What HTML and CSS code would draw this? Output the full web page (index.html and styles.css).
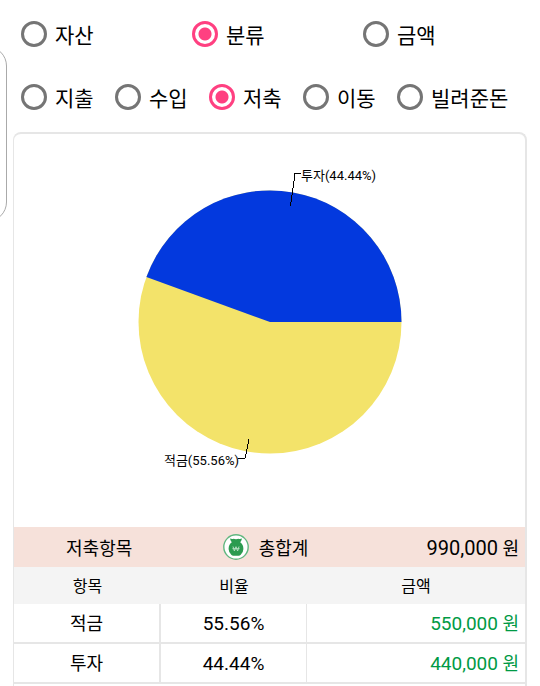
FILE: index.html
```html
<!DOCTYPE html>
<html lang="ko">
<head>
  <meta charset="UTF-8">
  <title>저축 통계</title>
  <meta name="viewport" content="width=device-width, initial-scale=1.0">
  <link rel="stylesheet" href="styles.css">
</head>
<body>
  <div class="edge-panel"></div>

  <form class="filters">
    <div class="group three">
      <label><input type="radio" name="view">자산</label>
      <label><input type="radio" name="view" checked>분류</label>
      <label><input type="radio" name="view">금액</label>
    </div>
    <div class="group five">
      <label><input type="radio" name="kind">지출</label>
      <label><input type="radio" name="kind">수입</label>
      <label><input type="radio" name="kind" checked>저축</label>
      <label><input type="radio" name="kind">이동</label>
      <label><input type="radio" name="kind">빌려준돈</label>
    </div>
  </form>

  <main class="card">
    <svg class="pie" viewBox="0 0 511 393" role="img" aria-label="저축 비율">
      <circle cx="256" cy="188" r="131.5" fill="#f3e36a"/>
      <path d="M256 188H387.5A131.5 131.5 0 0 0 132.4 143Z" fill="#0339de"/>
      <path class="leader" d="M276.5 72L281 39.5H287M235 305L231 324.5H224"/>
      <text x="287" y="46">투자(44.44%)</text>
      <text x="225" y="331" text-anchor="end">적금(55.56%)</text>
    </svg>

    <div class="summary">
      <span>저축항목</span>
      <span class="total">
        <svg class="bag" viewBox="0 0 26 26" aria-hidden="true">
          <circle cx="13" cy="13" r="12.2" fill="#fff" stroke="#62b780" stroke-width="1.4"/>
          <path d="M7 4.6Q9 5.4 10.5 4.8Q13 5.6 15.5 4.8Q17 5.4 19 4.6Q18.6 6.7 17.2 8.3Q20.4 10.4 20.4 15Q20.4 18.5 17.5 21.1Q16.8 21.8 15.7 21.8H10.3Q9.2 21.8 8.5 21.1Q5.6 18.5 5.6 15Q5.6 10.4 8.8 8.3Q7.4 6.7 7 4.6Z" fill="#2c9b50"/>
          <path d="M10 12.5L11.4 17L13 12.7L14.6 17L16 12.5M9.4 14.7H16.6" fill="none" stroke="#b4ddc1"/>
        </svg>
        총합계
      </span>
      <span class="sum"><span class="num">990,000</span> 원</span>
    </div>

    <table>
      <thead>
        <tr><th class="name">항목</th><th class="ratio">비율</th><th>금액</th></tr>
      </thead>
      <tbody>
        <tr><td>적금</td><td class="num">55.56%</td><td class="amount"><span class="num">550,000</span> 원</td></tr>
        <tr><td>투자</td><td class="num">44.44%</td><td class="amount"><span class="num">440,000</span> 원</td></tr>
      </tbody>
    </table>
  </main>
</body>
</html>
```

FILE: styles.css
```css
* { box-sizing: border-box; }
body {
  display: flex;
  flex-direction: column;
  min-height: 100vh;
  margin: 0;
  background: #fff;
  color: #000;
  font: 18px Roboto, "Noto Sans CJK KR", sans-serif;
}

/* handle that peeks in from the left edge of the screen */
.edge-panel {
  position: absolute;
  left: -40px;
  top: 46px;
  width: 47px;
  height: 176px;
  border: 1px solid #aaa;
  border-radius: 20px;
}

.filters { padding: 14px 6px 15px 21px; }
.group { display: grid; }
.three { grid-template-columns: repeat(3, 1fr); margin-bottom: 23px; }
.five { grid-template-columns: repeat(4, 94px) 1fr; }
label {
  display: flex;
  align-items: center;
  gap: 8px;
  height: 40px;
  font-size: 21px;
  white-space: nowrap;
}
input {
  appearance: none;
  width: 26px;
  height: 26px;
  margin: 0;
  border: 3px solid #757575;
  border-radius: 50%;
}
input:checked {
  border-color: #ff4081;
  background: radial-gradient(circle, #ff4081 6px, transparent 7px);
}

.card {
  flex: 1;
  margin: 0 13px;
  border: solid #e6e6e6;
  border-width: 2px 2px 0 1px;
  border-radius: 8px 8px 0 0;
}
.pie { display: block; width: 100%; }
.pie text { font-size: 13px; }
.leader { fill: none; stroke: #000; stroke-width: 1; shape-rendering: crispEdges; }

.summary {
  display: grid;
  grid-template-columns: repeat(3, 1fr);
  align-items: center;
  height: 40px;
  background: #f6e1da;
  text-align: center;
}
.total { display: flex; align-items: center; justify-content: center; gap: 10px; padding-right: 8px; }
.bag { width: 26px; height: 26px; }
.sum, .amount { padding-right: 6px; text-align: right; }
.num { font-size: 19px; }
.sum .num { font-size: 20px; }

table { width: 100%; border-collapse: separate; border-spacing: 0; table-layout: fixed; }
th, td { padding: 2px 0 0; text-align: center; line-height: 24px; }
th { height: 37px; background: #f4f4f4; font-size: 16px; font-weight: normal; }
.name { width: 147px; }
.ratio { width: 146px; }
td { height: 40px; border-bottom: 2px solid #e6e6e6; }
td:first-child { border-right: 2px solid #e6e6e6; }
td:nth-child(2) { border-right: 1px solid #e6e6e6; }
td.amount { padding-right: 6px; color: #009a44; text-align: right; }
```
